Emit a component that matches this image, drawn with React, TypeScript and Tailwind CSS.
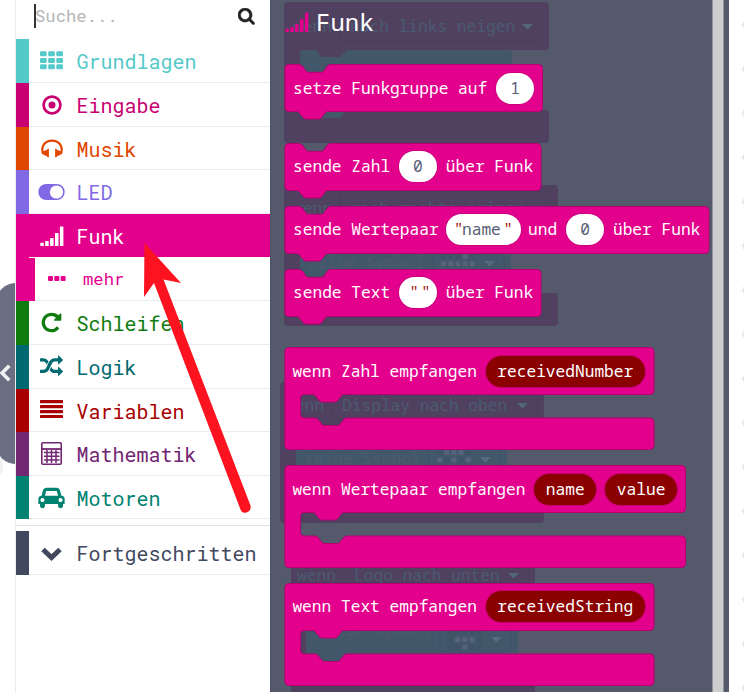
import React from "react";

const SANS_MONO = "font-['Roboto_Mono','DejaVu_Sans_Mono',monospace]";
const BLOCK_MONO = "font-['Noto_Sans_Mono','DejaVu_Sans_Mono',monospace]";

const P = {
  search:
    "M1216 832q0-185-131.5-316.5t-316.5-131.5-316.5 131.5-131.5 316.5 131.5 316.5 316.5 131.5 316.5-131.5 131.5-316.5zm512 832q0 52-38 90t-90 38q-54 0-90-38l-343-342q-179 124-399 124-143 0-273.5-55.5t-225-150-150-225-55.5-273.5 55.5-273.5 150-225 225-150 273.5-55.5 273.5 55.5 225 150 150 225 55.5 273.5q0 220-124 399l343 343q37 37 37 90z",
  repeat:
    "M1664 256v448q0 26-19 45t-45 19h-448q-42 0-59-40-17-39 14-69l138-138q-148-137-349-137-104 0-198.5 40.5t-163.5 109.5-109.5 163.5-40.5 198.5 40.5 198.5 109.5 163.5 163.5 109.5 198.5 40.5q119 0 225-52t179-147q7-10 23-12 15 0 25 9l137 138q9 8 9.5 20.5t-7.5 22.5q-109 132-264 204.5t-327 72.5q-156 0-298-61t-245-164-164-245-61-298 61-298 164-245 245-164 298-61q147 0 284.5 55.5t244.5 156.5l130-129q29-31 70-14 39 17 39 59z",
  random:
    "M666 481q-60 92-137 273-22-45-37-72.5t-40.5-63.5-51-56.5-63-35-81.5-14.5h-224q-14 0-23-9t-9-23v-192q0-14 9-23t23-9h224q250 0 410 225zm1126 799q0 14-9 23l-320 320q-9 9-23 9-13 0-22.5-9.5t-9.5-22.5v-192q-32 0-85 .5t-81 1-73-1-71-5-64-10.5-63-18.5-58-28.5-59-40-55-53.5-56-69.5q59-93 136-273 22 45 37 72.5t40.5 63.5 51 56.5 63 35 81.5 14.5h256v-192q0-14 9-23t23-9q12 0 24 10l319 319q9 9 9 23zm0-896q0 14-9 23l-320 320q-9 9-23 9-13 0-22.5-9.5t-9.5-22.5v-192h-256q-48 0-87 15t-69 45-51 61.5-45 77.5q-32 62-78 171-29 66-49.5 111t-54 105-64 100-74 83-90 68.500-106.500 42-128 16.500h-224q-14 0-23-9t-9-23v-192q0-14 9-23t23-9h224q48 0 87-15t69-45 51-61.5 45-77.5q32-62 78-171 29-66 49.5-111t54-105 64-100 74-83 90-68.5 106.5-42 128-16.5h256v-192q0-14 9-23t23-9q12 0 24 10l319 319q9 9 9 23z",
  car: "M480 1088q0-66-47-113t-113-47-113 47-47 113 47 113 113 47 113-47 47-113zm36-320h1016l-89-357q-2-8-14-17.5t-21-9.5h-768q-9 0-21 9.5t-14 17.5zm1372 320q0-66-47-113t-113-47-113 47-47 113 47 113 113 47 113-47 47-113zm160-96v384q0 14-9 23t-23 9h-96v128q0 80-56 136t-136 56-136-56-56-136v-128h-1024v128q0 80-56 136t-136 56-136-56-56-136v-128h-96q-14 0-23-9t-9-23v-384q0-93 65.5-158.5t158.5-65.5h28l105-419q23-94 104-157.5t179-63.5h768q98 0 179 63.5t104 157.5l105 419h28q93 0 158.5 65.5t65.5 158.5z",
};

function Glyph({ d, wide = false }: { d: string; wide?: boolean }) {
  return wide ? (
    <svg className="h-[23px] w-[27px] shrink-0" viewBox="0 0 2048 1792" fill="currentColor"><path d={d} /></svg>
  ) : (
    <svg className="size-[23px] shrink-0" viewBox="0 0 1792 1792" fill="currentColor"><path d={d} /></svg>
  );
}

function Signal() {
  return (
    <svg className="h-5 w-6 shrink-0" viewBox="0 0 24 20" fill="currentColor">
      <rect x="0.3" y="16.8" width="3.5" height="3.2" rx=".5" />
      <rect x="5.2" y="15" width="3.5" height="5" rx=".5" />
      <rect x="10.1" y="12" width="3.5" height="8" rx=".5" />
      <rect x="15" y="7" width="3.5" height="13" rx=".5" />
      <rect x="19.9" y="0.5" width="3.5" height="19.5" rx=".5" />
    </svg>
  );
}

const icons = {
  grid: (
    <svg className="h-[19px] w-[23px]" viewBox="0 0 23 19" fill="currentColor">
      {[0, 8.2, 16.3].map((x) => [0.3, 7, 13.3].map((y) => <rect key={`${x}-${y}`} x={x} y={y} width="6.7" height="5" rx="1.3" />))}
    </svg>
  ),
  dot: (
    <svg className="size-5" viewBox="0 0 20 20"><circle cx="10" cy="10" r="8.4" fill="none" stroke="currentColor" strokeWidth="2.7" /><circle cx="10" cy="10" r="3.5" fill="currentColor" /></svg>
  ),
  head: (
    <svg className="h-[19px] w-[22px]" viewBox="0 0 22 19" fill="currentColor">
      <path d="M1.8 14C-.3 6.500 4.500 1.600 11 1.600S22.300 6.500 20.200 14" fill="none" stroke="currentColor" strokeWidth="2.200" />
      <path d="M7.900 9.800 V18.300 H6.500 L6 17.300 L.9 15 Q1.200 11.500 6 11 L6.500 9.800 Z M14.100 9.800 V18.300 H15.500 L16 17.300 L21.100 15 Q20.800 11.500 16 11 L15.500 9.800 Z" />
    </svg>
  ),
  toggle: (
    <svg className="h-4 w-[27px]" viewBox="0 0 27 16"><rect x=".3" width="26.4" height="16" rx="8" fill="currentColor" /><circle cx="18.500" cy="8" r="6.600" fill="white" /></svg>
  ),
  signal: <Signal />,
  repeat: <Glyph d={P.repeat} />,
  random: <Glyph d={P.random} />,
  lines: (
    <svg className="-mt-0.5 h-[18px] w-[23px]" viewBox="0 0 23 18" fill="currentColor">
      {[0, 5, 10, 15].map((y) => <rect key={y} y={y} width="23" height="3.2" rx=".5" />)}
    </svg>
  ),
  calc: (
    <svg className="h-[23px] w-[21px]" viewBox="0 0 21 23" fill="none" stroke="currentColor">
      <rect x=".8" y=".8" width="19.400" height="21.400" rx="1" strokeWidth="1.600" />
      <path d="M1 7H20" strokeWidth="1.800" />
      <path d="M3 10.500H18.500M3 14.300H18.500M3 18.100H18.500M6 8V21M10.500 8V21M15 8V21" strokeWidth="1.500" />
    </svg>
  ),
  car: <Glyph d={P.car} wide />,
  down: (
    <svg className="mt-[3px] h-[14px] w-[21px]" viewBox="0 0 21 14"><path d="M2 2.500L10.500 10.500L19 2.500" fill="none" stroke="currentColor" strokeWidth="5" /></svg>
  ),
};

type Cat = { label: string; icon: keyof typeof icons; h: string; fg: string; bar: string; active?: boolean };
const top: Cat[] = [
  { label: "Grundlagen", icon: "grid", h: "h-[44px]", fg: "text-[#54c9c9]", bar: "bg-[#54c9c9]" },
  { label: "Eingabe", icon: "dot", h: "h-[44px]", fg: "text-[#c90072]", bar: "bg-[#c90072]" },
  { label: "Musik", icon: "head", h: "h-[43px]", fg: "text-[#df4600]", bar: "bg-[#df4600]" },
  { label: "LED", icon: "toggle", h: "h-[44px]", fg: "text-[#8169e6]", bar: "bg-[#8169e6]" },
  { label: "Funk", icon: "signal", h: "h-[43px]", fg: "text-white", bar: "bg-[#e3008c]", active: true },
];
const bottom: Cat[] = [
  { label: "Schleifen", icon: "repeat", h: "h-[44px]", fg: "text-[#107c10]", bar: "bg-[#107c10]" },
  { label: "Logik", icon: "random", h: "h-[44px]", fg: "text-[#006970]", bar: "bg-[#006970]" },
  { label: "Variablen", icon: "lines", h: "h-[43px]", fg: "text-[#a80000]", bar: "bg-[#a80000]" },
  { label: "Mathematik", icon: "calc", h: "h-[44px]", fg: "text-[#712672]", bar: "bg-[#712672]" },
  { label: "Motoren", icon: "car", h: "h-[43px]", fg: "text-[#008272]", bar: "bg-[#008272]" },
];

function Category({ c }: { c: Cat }) {
  return (
    <div className={`flex ${c.h} ${c.fg}`}>
      <div className={`w-[13px] ${c.bar}`} />
      <div className={`flex flex-1 items-center ${c.active ? "bg-[#e3008c]" : "border-b border-[#e9ebed]"}`}>
        <div className="ml-2 flex w-[29px] items-center justify-center">{icons[c.icon]}</div>
        <span className="ml-[10.6px] pt-px text-[20px] leading-none">{c.label}</span>
      </div>
    </div>
  );
}

const NOTCH = "h10.5l3 1.500l3.500 5q1 1.300 2.500 1.300h13q1.500 0 2.500-1.300l3.500-5q1-1.500 3-1.500";
const NOTCH_BACK = "h-3l-1.500.800l-4.500 5.500q-1 1.200-2.500 1.200h-13q-1.500 0-2.500-1.200l-4.500-5.500l-1.500-.8";
const NOTCH_INNER = "h10.500l2.500.800l4.500 5.500q1 1.200 2.500 1.200h13q1.500 0 2.500-1.200l4.500-5.500l2-.8";

function statementPath(w: number) {
  return `M.5 4.500q0-4 4-4${NOTCH}H${w - 4}q4 0 4 4v39q0 4-4 4H46${NOTCH_BACK}H4.500q-4 0-4-4z`;
}
function wrapPath(w: number) {
  return `M.5 4.500q0-4 4-4H${w - 4}q4 0 4 4v39q0 4-4 4H62${NOTCH_BACK}h-9q-4 0-4 4v15.500q0 4 4 4${NOTCH_INNER}H${w - 4}q4 0 4 4v23.500q0 4-4 4H4.500q-4 0-4-4z`;
}

function Block({ w, wrap, gap, row, children }: { w: number; wrap?: boolean; gap: string; row: string; children: React.ReactNode }) {
  const h = wrap ? 103 : 57;
  return (
    <div className={`relative ${wrap ? "h-[102px]" : "h-[47px]"} ${gap}`} style={{ width: w }}>
      <svg className="absolute left-0 top-0 overflow-visible" width={w} height={h} viewBox={`0 0 ${w} ${h}`}>
        <path transform="translate(.4 0)" d={wrap ? wrapPath(w - 0.4) : statementPath(w - 0.4)} fill="#e3008c" stroke="#b60070" strokeWidth="1" />
      </svg>
      <div className={`relative flex items-center gap-[8.6px] whitespace-pre text-[16.2px] leading-none text-white ${row} ${BLOCK_MONO}`}>{children}</div>
    </div>
  );
}

function Value({ w = "w-[38.5px]", children }: { w?: string; children: React.ReactNode }) {
  return <span className={`flex h-[31px] shrink-0 items-center justify-center rounded-[15.5px] bg-white text-[#575e75] ring-1 ring-[#b60070]/50 ${w}`}>{children}</span>;
}
function Param({ children }: { children: React.ReactNode }) {
  return <span className="flex h-[31px] items-center rounded-full bg-[#8b0000] px-[11.75px] ring-1 ring-[#a3004a]/50">{children}</span>;
}
const Quote = ({ cls = "" }: { cls?: string }) => <span className={`text-[#a31515] ${cls}`}>"</span>;

type Ghost = { x: number; y: number; w: number; h: number; foot: number; text: string; tx: number; base: number; tri: number; inner: [number, number, number, number]; sym?: [number, number]; dots?: [number, number]; pattern: string };
const ghosts: Ghost[] = [
  { x: 14, y: 2, w: 265, h: 48, foot: 110, text: "nach links neigen", tx: 80, base: 32, tri: 257, inner: [30, 50, 212, 60], pattern: "" },
  { x: 14, y: 185, w: 274, h: 50, foot: 293, text: "nach rechts neigen", tx: 80, base: 214, tri: 266, inner: [30, 235, 211, 58], sym: [38, 268], dots: [171, 254], pattern: "0001011111" },
  { x: 10, y: 382, w: 264, h: 48, foot: 490, text: "Display nach oben", tx: 72, base: 411, tri: 252, inner: [26, 430, 211, 60], sym: [34, 464], dots: [167, 450], pattern: "011101010100100" },
  { x: 21, y: 566, w: 244, h: 47, foot: 673, text: "Logo nach unten", tx: 84, base: 581, tri: 243, inner: [36, 613, 212, 60], sym: [45, 636], dots: [178, 630], pattern: "000000111000100" },
];

function GhostBlock({ g }: { g: Ghost }) {
  const [ix, iy, iw, ih] = g.inner;
  return (
    <g>
      <rect x={g.x} y={g.y} width={g.w} height={g.h} rx="4" fill="#504161" />
      <rect x={g.x} y={g.y + 5} width={ix - g.x + 4} height={g.foot - g.y} fill="#504161" />
      <rect x={ix + 12} y={iy - 2} width="38" height="10" fill="#504161" />
      <rect x={g.x} y={g.foot} width={g.w} height="33" rx="4" fill="#504161" />
      <path d={`M${ix} ${iy + 4}q0-4 4-4h12l6 7h18l7-7H${ix + iw - 4}q4 0 4 4v${ih - 4}H${ix + 46}l-6 8h-17l-7-8H${ix}z`} fill="#43576b" />
      <rect x={g.tx - 10} y={g.base - 22} width={g.tri - g.tx + 25} height="31" rx="3" fill="none" stroke="#4c3f5e" />
      {g.dots && (
        <>
          <rect x={g.dots[0] - 8} y={g.dots[1] - 12} width="71" height="34" rx="3" fill="none" stroke="#3f5369" />
          {g.pattern.split("").map((v, i) => (
            <rect key={i} x={g.dots![0] + (i % 5) * 7.2} y={g.dots![1] + Math.floor(i / 5) * 7.2} width="5" height="5" rx="1" fill={v === "1" ? "#56637a" : "#3f5367"} />
          ))}
          <path d={`M${g.dots[0] + 43} ${g.dots[1] + 7}h11l-5.5 5.5z`} fill="#56697e" />
        </>
      )}
      <g fill="#4b5b6f" fontSize="16.2">
        <text x={g.tx - 57} y={g.base}>wenn</text>
        <text x={g.tx} y={g.base}>{g.text}</text>
        {g.sym && <text x={g.sym[0]} y={g.sym[1]}>zeige Symbol</text>}
      </g>
      <path d={`M${g.tri - 5} ${g.base - 8}h11l-5.5 5.5z`} fill="#53677a" />
    </g>
  );
}

export default function App() {
  return (
    <div className={`relative flex h-[692px] w-[744px] overflow-hidden bg-white ${SANS_MONO}`}>
      <div className="relative w-4 shrink-0 overflow-hidden border-r border-[#e9ebed]">
        <div className="absolute -left-5 top-[409px] h-[70px] w-[23px] rounded-full bg-[#f2f2f2]" />
        <div className="absolute -left-1 top-[283px] h-[181px] w-[40px] rounded-[20px] bg-[#696e82]" />
        <svg className="absolute left-0 top-[363px] h-5 w-3" viewBox="0 0 12 20"><path d="M9.3 2.700L2 10L9.300 17.300" fill="none" stroke="#f0f0f2" strokeWidth="3.700" /></svg>
      </div>

      <aside className="w-[254px] shrink-0">
        <div className="flex h-[39px] items-start pl-[18px]">
          <div className="mt-1 h-6 w-0.5 bg-[#333]" />
          <span className="-ml-px mt-[7px] text-[17.2px] leading-[18px] text-[#b5b5b5]">Suche...</span>
          <svg className="ml-auto mr-[15px] mt-2 size-[17px]" viewBox="64 128 1700 1700" fill="#222" stroke="#222" strokeWidth="50"><path d={P.search} /></svg>
        </div>
        {top.map((c) => <Category key={c.label} c={c} />)}
        <div className="flex h-[44px] text-[#e3008c]">
          <div className="w-[13px] bg-[#e3008c]" />
          <div className="flex flex-1 items-center border-b border-[#e9ebed]">
            <div className="mt-px h-[43px] w-1.5 self-start bg-[#e3008c]" />
            <svg className="ml-[13px] h-[5px] w-[18px]" viewBox="0 0 18 5" fill="currentColor">
              <rect width="5" height="5" rx="1" /><rect x="6.3" width="5" height="5" rx="1" /><rect x="12.6" width="5" height="5" rx="1" />
            </svg>
            <span className="ml-4 pl-px text-[17.2px] leading-none">mehr</span>
          </div>
        </div>
        {bottom.map((c) => <Category key={c.label} c={c} />)}
        <div className="mb-[5px] h-[7px] border-b border-[#dfe1e4]" />
        <Category c={{ label: "Fortgeschritten", icon: "down", h: "h-[44px]", fg: "text-[#42495f]", bar: "bg-[#42495f]" }} />
      </aside>

      <main className="relative flex w-[459px] shrink-0 border-l border-[#4d5368] bg-[#54596c]">
        <svg className={`absolute -left-px top-0 h-[692px] w-[442px] ${BLOCK_MONO}`} viewBox="0 0 442 692">
          {ghosts.map((g) => <GhostBlock key={g.y} g={g} />)}
        </svg>
        <div className="relative w-[441px] pl-[13px]">
          <header className="flex h-[64px] pl-px text-[#e3008c]">
            <div className="mt-3"><Signal /></div>
            <h1 className={`ml-[7px] mt-[9px] text-[24px] leading-[26px] text-white ${BLOCK_MONO}`}>Funk</h1>
          </header>
          <Block w={258.5} gap="mb-8" row="h-[48px] pl-[9px]"><span>setze Funkgruppe auf</span><Value>1</Value></Block>
          <Block w={257} gap="mb-4" row="h-[46px] pl-[9px]"><span>sende Zahl</span><Value>0</Value><span>über Funk</span></Block>
          <Block w={425} gap="mb-4" row="h-[46px] pl-[9px]">
            <span>sende Wertepaar</span>
            <div className="-mx-[1.4px]"><Value w="w-[75px]"><Quote cls="tracking-[-1.5px]" />name<Quote cls="pl-[2.5px]" /></Value></div>
            <span>und</span><Value>0</Value><span>über Funk</span>
          </Block>
          <Block w={257} gap="mb-[31px]" row="h-[46px] pl-[9px]"><span>sende Text</span><Value><Quote cls="pl-1" /><Quote cls="pl-[2px]" /></Value><span>über Funk</span></Block>
          <Block w={370} wrap gap="mb-4" row="h-[48px] pl-[8.4px]"><span>wenn Zahl empfangen</span><Param>receivedNumber</Param></Block>
          <Block w={401.5} wrap gap="mb-4" row="h-[48px] pl-[8.4px]"><span>wenn Wertepaar empfangen</span><Param>name</Param><Param>value</Param></Block>
          <Block w={370} wrap gap="mb-0" row="h-[47px] pl-[8.4px]"><span>wenn Text empfangen</span><Param>receivedString</Param></Block>
        </div>
        <div className="w-3 border-x border-[#8f94a0] bg-[#cdcdcd]" />
      </main>
      <div className="relative flex-1">
        <svg className="absolute inset-0 h-full w-full" viewBox="0 0 15 692" stroke="#e4e4e4">
          {Array.from({ length: 16 }, (_, i) => <path key={i} d={`M12 ${25 + i * 44.2}h4M14.5 ${22 + i * 44.2}v6`} />)}
        </svg>
      </div>

      <svg className="pointer-events-none absolute left-0 top-0 h-[692px] w-[300px]" viewBox="0 0 300 692">
        <path d="M144.5 243L181 283L163.500 279.500L250.500 505.500Q251.500 511 246.500 512.500Q242 513.500 240.500 509.500L154 283L144 297Z" fill="#fc131f" />
      </svg>
    </div>
  );
}
